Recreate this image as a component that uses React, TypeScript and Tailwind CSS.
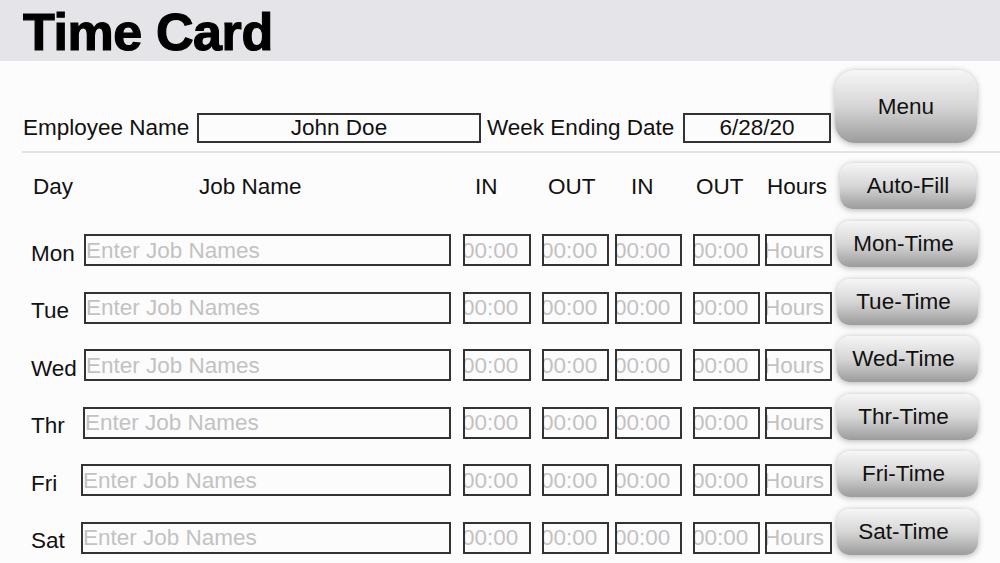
import React from "react";

const days = [
  { d: "Mon", jl: 84 },
  { d: "Tue", jl: 84 },
  { d: "Wed", jl: 84 },
  { d: "Thr", jl: 83 },
  { d: "Fri", jl: 81 },
  { d: "Sat", jl: 81 },
];

function Btn({ label, className }: { label: string; className: string }) {
  return (
    <div
      className={
        "flex items-center justify-center text-[22.5px] text-[#111] bg-gradient-to-b from-[#f6f6f6] via-[#d6d6d6] to-[#9c9c9c] shadow-[0_1px_6px_rgba(0,0,0,0.3)] " +
        className
      }
    >
      {label}
    </div>
  );
}

function TimeBox({ text, className }: { text: string; className: string }) {
  return (
    <div
      className={
        "h-[32px] border-2 border-[#333] overflow-hidden flex items-center " +
        className
      }
    >
      <span className="ml-[-3px] pt-[2px] whitespace-nowrap text-[22.5px] text-[#c2c2c2] leading-none">
        {text}
      </span>
    </div>
  );
}

export default function App() {
  return (
    <div className="w-[1000px] h-[563px] overflow-hidden bg-[#fdfcfd] font-['Liberation_Sans',Arial,sans-serif] text-[#111]">
      <div className="h-[61px] bg-[#e5e4e9] flex items-center pl-[23px] pt-[3px]">
        <span className="text-[52px] font-bold tracking-[-0.4px] text-black leading-none [-webkit-text-stroke:1.2px_black]">
          Time Card
        </span>
      </div>

      <div className="ml-[22px] h-[92px] flex items-end pb-[8px] border-b-2 border-[#e3e3e3]">
        <div className="flex items-center h-[30px]">
          <span className="w-[175px] pl-[1px] text-[22.5px] leading-[22px] whitespace-nowrap">
            Employee Name
          </span>
          <div className="w-[284px] h-[30px] border-2 border-[#333] flex items-center justify-center text-[22.5px] leading-none">
            John Doe
          </div>
          <span className="ml-[6px] w-[196px] text-[22.5px] leading-[22px] whitespace-nowrap">
            Week Ending Date
          </span>
          <div className="w-[148px] h-[30px] border-2 border-[#333] flex items-center justify-center text-[22.5px] leading-none">
            6/28/20
          </div>
        </div>
        <Btn label="Menu" className="ml-[4px] w-[142px] h-[73px] rounded-[20px]" />
      </div>

      <div className="ml-[22px] h-[68px] flex items-start pt-[10px]">
        <div className="flex items-center h-[46px] text-[22.5px] leading-[22px] whitespace-nowrap">
          <div className="w-[61px] pl-[11px] pt-[2px]">Day</div>
          <div className="w-[368px] pl-[116px] pt-[2px]">Job Name</div>
          <div className="ml-[12px] w-[68px] pl-[12px] pt-[2px]">IN</div>
          <div className="ml-[11px] w-[67px] pl-[6px] pt-[2px]">OUT</div>
          <div className="ml-[6px] w-[67px] pl-[16px] pt-[2px]">IN</div>
          <div className="ml-[11px] w-[67px] pl-[3px] pt-[2px]">OUT</div>
          <div className="ml-[5px] w-[67px] pl-[2px] pt-[2px]">Hours</div>
        </div>
        <Btn label="Auto-Fill" className="ml-[8px] w-[136px] h-[46px] rounded-[13px]" />
      </div>

      {days.map((r) => (
        <div key={r.d} className="ml-[22px] h-[57.5px] flex items-start">
          <div className="flex items-start pt-[13px]">
            <div className="w-[61px] h-[32px] flex items-center pl-[9px] pt-[7px] text-[22.5px] leading-[22px]">
              {r.d}
            </div>
            <div className="w-[368px] flex">
              <div
                className="h-[32px] border-2 border-[#333] flex items-center overflow-hidden flex-1"
                style={{ marginLeft: r.jl - 83 }}
              >
                <span className="ml-[0px] pt-[2px] whitespace-nowrap text-[22.5px] text-[#c2c2c2] leading-none">
                  Enter Job Names
                </span>
              </div>
            </div>
            <TimeBox text="00:00" className="ml-[12px] w-[68px]" />
            <TimeBox text="00:00" className="ml-[11px] w-[67px]" />
            <TimeBox text="00:00" className="ml-[6px] w-[67px]" />
            <TimeBox text="00:00" className="ml-[11px] w-[67px]" />
            <TimeBox text="Hours" className="ml-[5px] w-[67px]" />
          </div>
          <Btn label={r.d + "-Time"} className="ml-[5px] w-[141px] h-[46px] rounded-[13px] pr-[8px]" />
        </div>
      ))}
    </div>
  );
}
